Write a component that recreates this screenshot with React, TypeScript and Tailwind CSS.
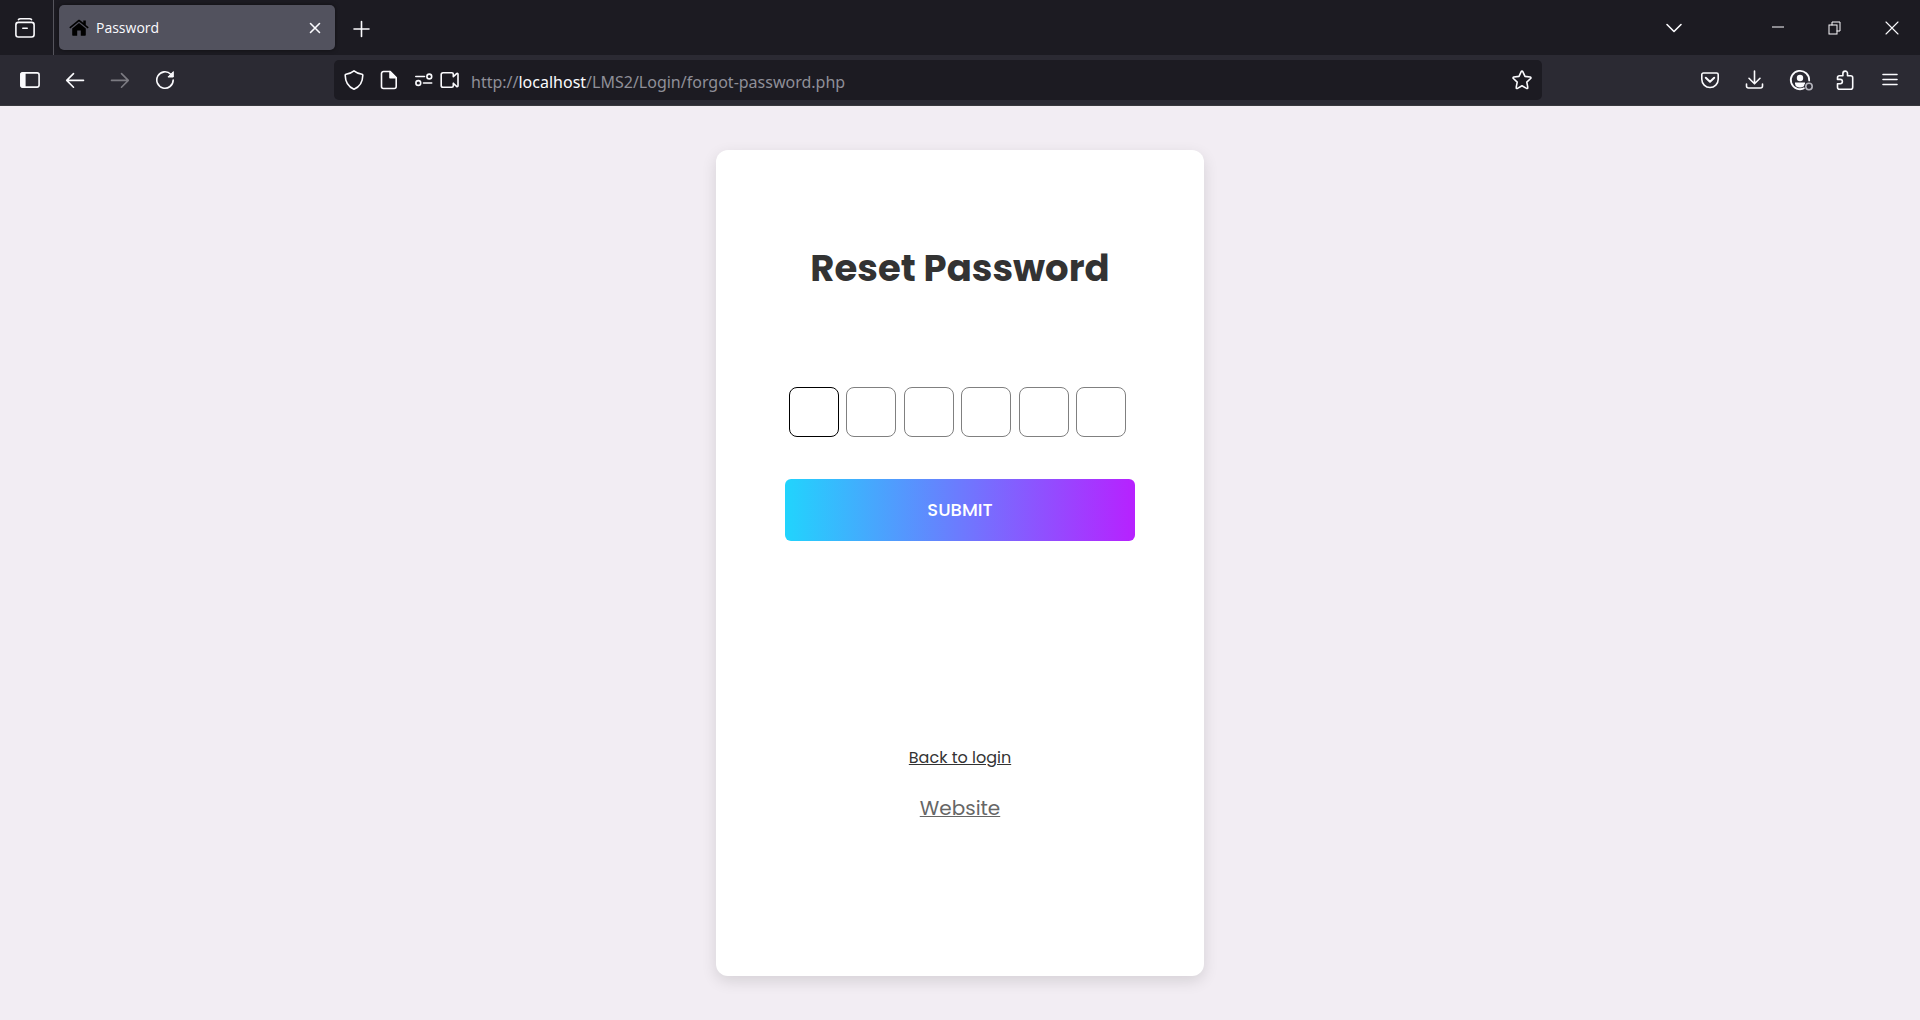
import type { ReactNode } from "react";

function Icon({ children, size = 20 }: { children: ReactNode; size?: number }) {
  return (
    <svg
      width={size}
      height={size}
      viewBox={`0 0 ${size} ${size}`}
      fill="none"
      stroke="currentColor"
      strokeWidth="1.6"
      strokeLinecap="round"
      strokeLinejoin="round"
      className="shrink-0"
      aria-hidden="true"
    >
      {children}
    </svg>
  );
}

function ToolButton({ label, children, disabled }: { label: string; children: ReactNode; disabled?: boolean }) {
  return (
    <button
      type="button"
      aria-label={label}
      disabled={disabled}
      className="flex size-10 shrink-0 items-center justify-center text-[#fbfbfe] disabled:text-[#7c7b82]"
    >
      {children}
    </button>
  );
}

function TabStrip() {
  return (
    <div className="flex h-[55px] items-stretch bg-[#1c1b22] text-[#fbfbfe]">
      <div className="flex w-[54px] items-center border-r border-[#55545c] pl-[5px]">
        <ToolButton label="Recent browsing">
          <Icon>
            <path d="M3.500 1.600C4 1 4.700 .8 5.500 .8h9c.8 0 1.500 .2 2 .8" />
            <rect x=".9" y="4.400" width="18.200" height="14.600" rx="2.500" />
            <path d="M7.800 10.200h4.400" />
          </Icon>
        </ToolButton>
      </div>
      <div className="my-[5px] ml-[5px] flex w-[276px] items-center rounded-[5px] bg-[#52525e] pl-[10px] shadow-[0_0_4px_rgba(0,0,0,0.5)]">
        <svg width="20" height="18" viewBox="0 0 20 18" fill="#000" className="shrink-0" aria-hidden="true">
          <path d="M10 3.900 3.200 9.500v6.300c0 .6.400 1 1 1h4v-5.200h3.600v5.200h4c.6 0 1-.4 1-1V9.500z" />
          <path d="M10 .8c-.4 0-.8.100-1.100.4L.3 8.300l1 1.300L10 2.500l8.700 7.100 1-1.300-2.900-2.400V1.500h-2.500v2.300l-3.200-2.600C10.800.9 10.400.8 10 .8z" />
        </svg>
        <span className="ml-[7px] flex-1 text-[14px] leading-5">Password</span>
        <button type="button" aria-label="Close tab" className="mr-[10px] flex size-5 items-center justify-center">
          <Icon>
            <path d="m5.500 5.500 9 9m0-9-9 9" />
          </Icon>
        </button>
      </div>
      <div className="ml-[6px] flex items-center">
        <ToolButton label="New tab">
          <Icon>
            <path d="M10.500 3.500v15M3 11h15" />
          </Icon>
        </ToolButton>
      </div>
      <div className="ml-auto flex items-center">
        <ToolButton label="List all tabs">
          <Icon>
            <path d="m3 6.500 7 7 7-7" />
          </Icon>
        </ToolButton>
        <div className="ml-[55px] flex">
          <button type="button" aria-label="Minimize" className="flex h-10 w-[57px] items-center justify-center">
            <Icon>
              <path d="M4 9h12" strokeWidth="1" strokeLinecap="butt" />
            </Icon>
          </button>
          <button type="button" aria-label="Restore" className="flex h-10 w-[57px] items-center justify-center">
            <Icon>
              <g strokeWidth="1" strokeLinejoin="miter">
                <rect x="4" y="7" width="8" height="9" />
                <path d="M7 7V4h8v9h-3" />
              </g>
            </Icon>
          </button>
          <button type="button" aria-label="Close window" className="flex h-10 w-[57px] items-center justify-center">
            <Icon>
              <path d="m4 4 12 12M16 4 4 16" strokeWidth="1.100" />
            </Icon>
          </button>
        </div>
      </div>
    </div>
  );
}

function AddressBar() {
  return (
    <div className="mr-[148px] ml-[149px] flex h-10 min-w-0 flex-1 items-center rounded-[5px] bg-[#1c1b22] pl-[10px] text-[#fbfbfe]">
      <button type="button" aria-label="Tracking protection">
        <Icon>
          <path d="M10 .9c-2.300 1.900-4.700 2.900-8 3.400-.5.100-.8.500-.8 1C1.300 11.500 4.500 17 10 19.200 15.500 17 18.700 11.500 18.800 5.300c0-.5-.3-.9-.8-1C14.700 3.800 12.300 2.800 10 .9z" />
        </Icon>
      </button>
      <button type="button" aria-label="Site information" className="ml-[15px]">
        <Icon>
          <path d="M4.500 1.500H11l6.200 6.200v8.800a2 2 0 0 1-2 2H4.500a2 2 0 0 1-2-2v-13a2 2 0 0 1 2-2z" />
          <path d="M11 1.500v6.200h6.200z" fill="currentColor" />
        </Icon>
      </button>
      <button type="button" aria-label="Permissions" className="ml-[15px]">
        <Icon>
          <path d="M1.800 6.500h8.700M9.500 13h8.200" />
          <circle cx="15.300" cy="6.500" r="2.400" />
          <circle cx="4.300" cy="13" r="2.400" />
        </Icon>
      </button>
      <button type="button" aria-label="Camera permission" className="ml-[6px]">
        <Icon>
          <path d="M3 2.800h8.800a1.500 1.500 0 0 1 1.500 1.500v2.500l3.300-3.200c.6-.6 1.400-.2 1.400.6v11.600c0 .8-.8 1.200-1.400.6l-3.300-3.200v2.500a1.500 1.500 0 0 1-1.500 1.500H3A1.800 1.800 0 0 1 1.200 15.400V4.600a1.800 1.800 0 0 1 1.800-1.800z" />
        </Icon>
      </button>
      <div
        role="textbox"
        aria-label="Address"
        contentEditable
        suppressContentEditableWarning
        className="ml-[11px] min-w-0 flex-1 truncate pt-1 font-['Noto_Sans',sans-serif] text-[16px] leading-6 text-[#8f8f98] outline-none"
      >
        http://<span className="text-[#fbfbfe]">localhost</span>/LMS2/Login/forgot-password.php
      </div>
      <button type="button" aria-label="Bookmark this page" className="mr-[10px]">
        <Icon>
          <path d="M9.200 1.600a.9.900 0 0 1 1.600 0l2.200 4.800 5.100.6c.8.100 1.100 1 .5 1.500l-3.800 3.600 1 5.300c.2.800-.6 1.400-1.300 1L10 15.700l-4.500 2.700c-.7.400-1.500-.2-1.300-1l1-5.300L1.400 8.500c-.6-.5-.3-1.400.5-1.500L7 6.400z" />
        </Icon>
      </button>
    </div>
  );
}

function Toolbar() {
  return (
    <div className="flex h-[51px] items-center border-b border-[#38383d] bg-[#2b2a33] px-[10px]">
      <div className="flex gap-[5px]">
        <ToolButton label="Show sidebar">
          <Icon>
            <rect x=".9" y="2.900" width="18.200" height="14.200" rx="2" />
            <path d="M2.500 3h2.300v14H2.500A1.500 1.500 0 0 1 1 15.500v-11A1.500 1.500 0 0 1 2.500 3z" fill="currentColor" />
          </Icon>
        </ToolButton>
        <ToolButton label="Back">
          <Icon>
            <path d="M18.500 10.400H2M8.500 3.600l-6.800 6.800 6.800 6.800" />
          </Icon>
        </ToolButton>
        <ToolButton label="Forward" disabled>
          <Icon>
            <path d="M1.500 10.400H18M11.500 3.600l6.800 6.800-6.800 6.800" />
          </Icon>
        </ToolButton>
        <ToolButton label="Reload">
          <Icon>
            <path d="M15.800 4.200A8.200 8.200 0 1 0 18.200 10" />
            <path d="M18.300 2v5h-5z" fill="currentColor" strokeWidth="1" />
          </Icon>
        </ToolButton>
      </div>
      <AddressBar />
      <div className="flex gap-[5px]">
        <ToolButton label="Save to Pocket">
          <Icon>
            <path d="M3.400 3h13.200c.9 0 1.600.7 1.600 1.600v4.700a8.200 8.200 0 0 1-16.400 0V4.600C1.800 3.700 2.500 3 3.400 3z" />
            <path d="m5.800 7.800 4.200 4 4.200-4" strokeWidth="2" />
          </Icon>
        </ToolButton>
        <ToolButton label="Downloads">
          <Icon>
            <path d="M9.500 1v12.500M4 8.300l5.500 5.500 5.500-5.500M1.500 14v2c0 1.200.8 2 2 2h12c1.200 0 2-.8 2-2v-2" />
          </Icon>
        </ToolButton>
        <ToolButton label="Account">
          <Icon size={28}>
            <path d="M18.600 22A9.200 9.200 0 1 1 23.200 14.500" strokeWidth="1.800" />
            <circle cx="14" cy="12" r="3.200" fill="currentColor" stroke="none" />
            <path d="M9 16.500h10v1.300a7 7 0 0 1-1.400 2.700 7.500 7.500 0 0 1-7.200 0A6 6 0 0 1 9 17.800z" fill="currentColor" stroke="none" />
            <circle cx="23" cy="20.500" r="4.800" fill="#2b2a33" stroke="none" />
            <circle cx="23" cy="20.500" r="3.200" stroke="#b4b4bc" />
          </Icon>
        </ToolButton>
        <ToolButton label="Extensions">
          <Icon>
            <path d="M4.500 5.800h3.400V3.400a2.300 2.300 0 0 1 4.600 0v2.400h3.200c1.200 0 2 .8 2 2v9.400c0 1.200-.8 2-2 2H4.500c-1.200 0-2-.8-2-2v-3.400h2.700a2.200 2.200 0 0 0 0-4.400H2.500V7.800c0-1.200.8-2 2-2z" />
          </Icon>
        </ToolButton>
        <ToolButton label="Open application menu">
          <Icon>
            <path d="M3 4.500h14M3 9.500h14M3 14.500h14" />
          </Icon>
        </ToolButton>
      </div>
    </div>
  );
}

const digits = [1, 2, 3, 4, 5, 6];

function ResetPasswordCard() {
  return (
    <form
      onSubmit={(e) => e.preventDefault()}
      className="flex w-[488px] flex-col items-center rounded-xl bg-white px-[69px] pt-[90px] pb-[153px] text-[#333] shadow-[0_5px_15px_rgba(0,0,0,0.12)]"
    >
      <h1 className="text-[37px] leading-[57px] font-bold whitespace-nowrap">Reset Password</h1>
      <div className="mt-[90px] flex w-full justify-between pr-[9px] pl-1">
        {digits.map((n) => (
          <input
            key={n}
            type="text"
            inputMode="numeric"
            maxLength={1}
            aria-label={`Digit ${n}`}
            className="size-[50px] rounded-[8px] border border-[#808080] text-center text-xl outline-none first:border-black"
          />
        ))}
      </div>
      <button
        type="submit"
        className="mt-[42px] h-[62px] w-full rounded-[6px] bg-linear-to-r/srgb from-[#21d4fd] to-[#b721ff] pb-0.5 text-[18px] leading-[27px] font-medium text-white"
      >
        SUBMIT
      </button>
      <a href="#login" className="mt-[205px] text-[16px] leading-6 underline decoration-1">
        Back to login
      </a>
      <a href="#website" className="mt-[23px] text-[20px] leading-[30px] text-[#666] underline decoration-1">
        Website
      </a>
    </form>
  );
}

export default function App() {
  return (
    <div className="flex min-h-screen flex-col bg-[#f2edf3] font-[Poppins,Inter,sans-serif]">
      <header className="font-['Segoe_UI','Open_Sans','Noto_Sans',sans-serif]">
        <TabStrip />
        <Toolbar />
      </header>
      <main className="flex flex-1 items-center justify-center py-11">
        <ResetPasswordCard />
      </main>
    </div>
  );
}
